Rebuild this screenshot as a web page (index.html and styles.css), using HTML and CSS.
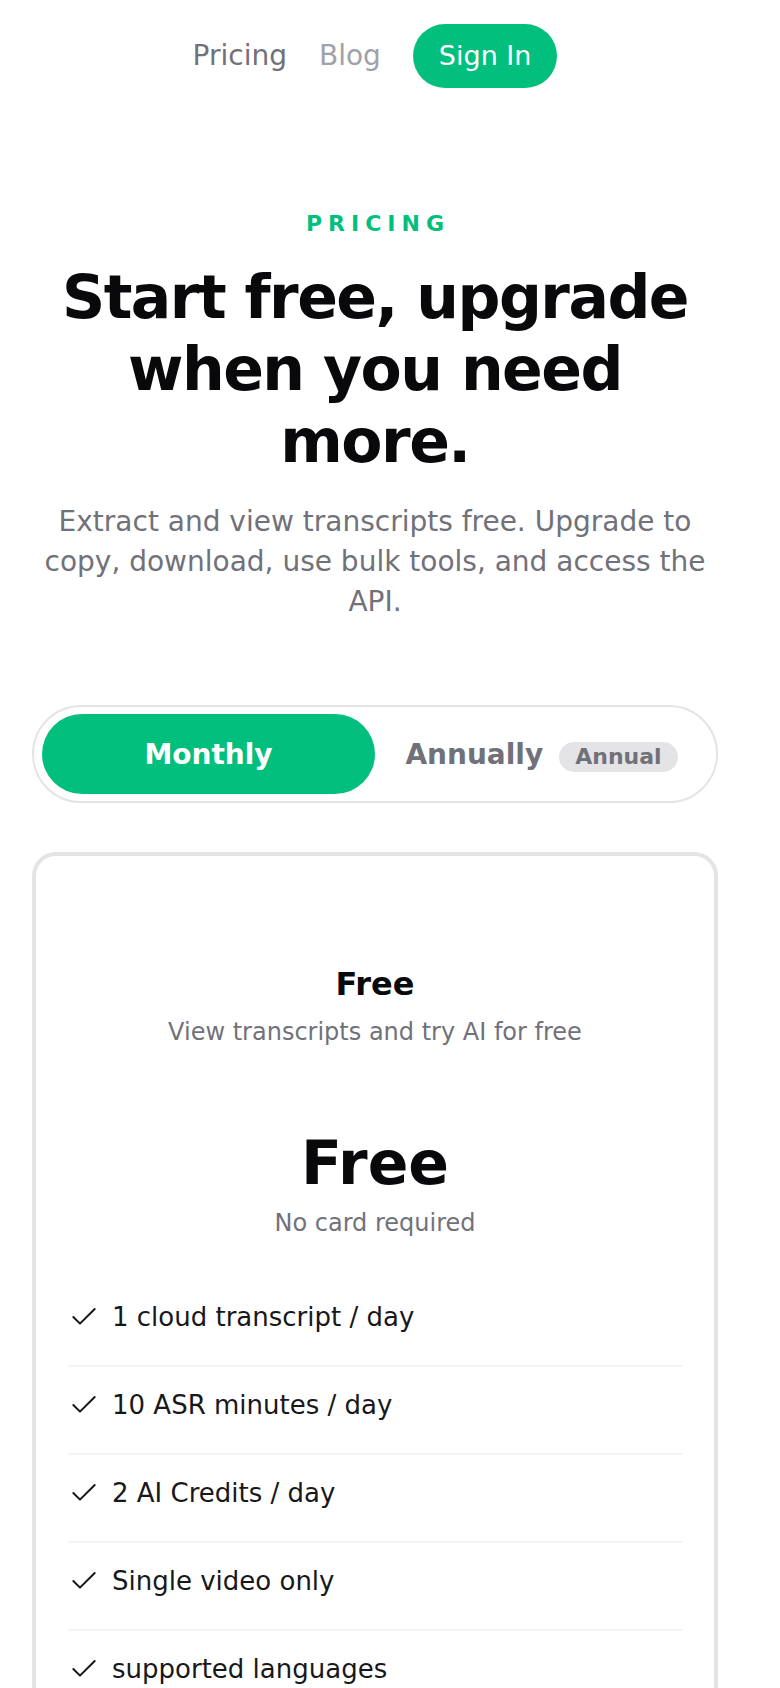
FILE: index.html
```html
<!DOCTYPE html>
<html lang="en">
<head>
<meta charset="utf-8">
<title>Pricing</title>
<link rel="stylesheet" href="styles.css">
</head>
<body>
<div class="page">
  <header class="nav">
    <a class="nav-link" href="#">Pricing</a>
    <a class="nav-link nav-link-muted" href="#">Blog</a>
    <a class="signin" href="#">Sign In</a>
  </header>

  <section class="hero">
    <p class="eyebrow">PRICING</p>
    <h1 class="headline">Start free, upgrade when you need more.</h1>
    <p class="lead">Extract and view transcripts free. Upgrade to copy, download, use bulk tools, and access the API.</p>
  </section>

  <div class="toggle">
    <button class="toggle-opt toggle-opt-active" type="button">Monthly</button>
    <button class="toggle-opt" type="button">Annually <span class="badge">Annual</span></button>
  </div>

  <div class="card">
    <h2 class="plan-name">Free</h2>
    <p class="plan-desc">View transcripts and try AI for free</p>
    <div class="plan-price">Free</div>
    <p class="plan-note">No card required</p>
    <ul class="features">
      <li class="feature"><svg class="check" viewBox="0 0 24 24" fill="none" stroke="currentColor" stroke-width="1.5" stroke-linecap="round" stroke-linejoin="round"><path d="M20 6 9 17l-5-5"/></svg><span>1 cloud transcript / day</span></li>
      <li class="feature"><svg class="check" viewBox="0 0 24 24" fill="none" stroke="currentColor" stroke-width="1.5" stroke-linecap="round" stroke-linejoin="round"><path d="M20 6 9 17l-5-5"/></svg><span>10 ASR minutes / day</span></li>
      <li class="feature"><svg class="check" viewBox="0 0 24 24" fill="none" stroke="currentColor" stroke-width="1.5" stroke-linecap="round" stroke-linejoin="round"><path d="M20 6 9 17l-5-5"/></svg><span>2 AI Credits / day</span></li>
      <li class="feature"><svg class="check" viewBox="0 0 24 24" fill="none" stroke="currentColor" stroke-width="1.5" stroke-linecap="round" stroke-linejoin="round"><path d="M20 6 9 17l-5-5"/></svg><span>Single video only</span></li>
      <li class="feature"><svg class="check" viewBox="0 0 24 24" fill="none" stroke="currentColor" stroke-width="1.5" stroke-linecap="round" stroke-linejoin="round"><path d="M20 6 9 17l-5-5"/></svg><span>supported languages</span></li>
    </ul>
  </div>
</div>
</body>
</html>
```

FILE: styles.css
```css
* { box-sizing: border-box; }

html, body {
  margin: 0;
  padding: 0;
  background: #ffffff;
}

body {
  font-family: "DejaVu Sans", "Noto Sans", sans-serif;
  color: #09090b;
}

.page {
  width: 750px;
  padding: 0 32px 40px;
}

/* Nav */
.nav {
  display: flex;
  justify-content: center;
  align-items: center;
  gap: 32px;
  padding-top: 24px;
  height: 88px;
}

.nav-link {
  font-size: 28px;
  line-height: 40px;
  color: #71717a;
  text-decoration: none;
}

.nav-link-muted {
  color: #a1a1aa;
}

.signin {
  display: block;
  height: 64px;
  padding: 12px 26px;
  border-radius: 9999px;
  background: #02bf7e;
  color: #ffffff;
  font-size: 27px;
  line-height: 40px;
  text-decoration: none;
}

/* Hero */
.hero {
  padding-top: 120px;
  text-align: center;
}

.eyebrow {
  margin: 0;
  padding-left: 6px;
  font-size: 22px;
  line-height: 32px;
  font-weight: 700;
  letter-spacing: 6px;
  color: #02bf7e;
}

.headline {
  margin: 21px 0 0;
  font-size: 60px;
  line-height: 72px;
  font-weight: 700;
  letter-spacing: -1.5px;
  color: #09090b;
}

.lead {
  margin: 25px 0 0;
  font-size: 28px;
  line-height: 40px;
  color: #71717a;
}

/* Toggle */
.toggle {
  margin-top: 83px;
  display: grid;
  grid-template-columns: 1fr 1fr;
  padding: 7px 8px;
  border: 2px solid #e4e4e7;
  border-radius: 9999px;
  background: #ffffff;
}

.toggle-opt {
  height: 80px;
  display: flex;
  align-items: center;
  justify-content: center;
  gap: 16px;
  border: 0;
  border-radius: 9999px;
  background: transparent;
  font-family: "DejaVu Sans", "Noto Sans", sans-serif;
  font-size: 28px;
  font-weight: 700;
  color: #71717a;
  padding: 0;
}

.toggle-opt-active {
  background: #02bf7e;
  color: #ffffff;
}

.badge {
  display: inline-block;
  padding: 1px 16px;
  border-radius: 9999px;
  background: #e4e4e7;
  color: #71717a;
  font-size: 22px;
  line-height: 28px;
  font-weight: 700;
  margin-top: 6px;
}

/* Card */
.card {
  margin-top: 49px;
  border: 4px solid #e4e4e7;
  border-radius: 24px;
  padding: 108px 32px 32px;
  text-align: center;
}

.plan-name {
  margin: 0;
  font-size: 32px;
  line-height: 40px;
  font-weight: 700;
  color: #09090b;
}

.plan-desc {
  margin: 12px 0 0;
  font-size: 24px;
  line-height: 32px;
  color: #71717a;
}

.plan-price {
  margin-top: 79px;
  font-size: 60px;
  line-height: 72px;
  font-weight: 700;
  color: #09090b;
}

.plan-note {
  margin: 8px 0 0;
  font-size: 24px;
  line-height: 32px;
  color: #71717a;
}

.features {
  list-style: none;
  margin: 40px 0 0;
  padding: 0;
  text-align: left;
}

.feature {
  display: flex;
  align-items: center;
  gap: 12px;
  padding: 18px 0 28px;
  font-size: 26px;
  line-height: 40px;
  color: #18181b;
}

.feature + .feature {
  border-top: 2px solid #f4f4f5;
}

.check {
  width: 32px;
  height: 32px;
  flex: none;
  color: #18181b;
}
```
